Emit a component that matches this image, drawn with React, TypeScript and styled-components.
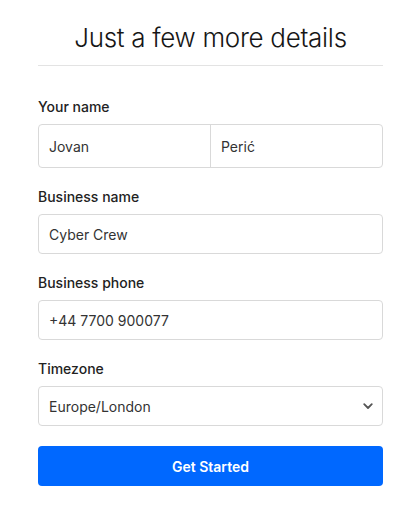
import * as React from "react"
import styled, { createGlobalStyle } from "styled-components"

const GlobalStyle = createGlobalStyle`
    body {
        margin: 0;
        background: #fff;
        font-family: Inter, "Noto Sans", sans-serif;
    }
`

const Page = styled.main`
    width: 345px;
    padding: 22px 36px 20px 38px;
`

const Title = styled.h1`
    margin: 0;
    padding-bottom: 11px;
    border-bottom: 1px solid #e3e3e3;
    text-align: center;
    font-family: Inter, sans-serif;
    font-size: 26px;
    line-height: 32px;
    font-weight: 350;
    letter-spacing: -0.3px;
    color: #161616;
`

const Form = styled.form`
    display: flex;
    flex-direction: column;
    gap: 19px;
    margin-top: 31px;
`

const Field = styled.div`
    display: flex;
    flex-direction: column;
`

const Label = styled.label`
    font-size: 14px;
    line-height: 20px;
    font-weight: 500;
    color: #222;
    margin-bottom: 7px;
`

const Box = styled.div<{ $tall?: boolean }>`
    display: flex;
    height: ${p => (p.$tall ? 44 : 40)}px;
    box-sizing: border-box;
    border: 1px solid #d9d9d9;
    border-radius: 4px;
    background: #fff;
    overflow: hidden;
`

const Input = styled.input<{ $split?: boolean }>`
    flex: 1;
    min-width: 0;
    border: none;
    border-left: ${p => (p.$split ? "1px solid #d9d9d9" : "none")};
    padding: 0 10px;
    font-family: inherit;
    font-size: 14px;
    color: #333;
    background: transparent;
    outline: none;
`

const Select = styled.div`
    flex: 1;
    display: flex;
    align-items: center;
    justify-content: space-between;
    padding: 0 8px 0 10px;
    font-size: 14px;
    color: #333;
`

const Button = styled.button`
    margin-top: 1px;
    height: 40px;
    border: none;
    border-radius: 4px;
    background: #0068ff;
    color: #fff;
    font-family: inherit;
    font-size: 14px;
    font-weight: 600;
`

const Chevron = () => (
    <svg width="12" height="12" viewBox="0 0 12 12">
        <path d="M2.2 4.2 L6 8 L9.8 4.2" fill="none" stroke="#555" strokeWidth="1.8" strokeLinecap="round" strokeLinejoin="round" />
    </svg>
)

const App = () => {
    return (
        <>
            <GlobalStyle />
            <Page>
                <Title>Just a few more details</Title>
                <Form onSubmit={e => e.preventDefault()}>
                    <Field>
                        <Label>Your name</Label>
                        <Box $tall>
                            <Input defaultValue="Jovan" />
                            <Input $split defaultValue="Perić" />
                        </Box>
                    </Field>
                    <Field>
                        <Label>Business name</Label>
                        <Box>
                            <Input defaultValue="Cyber Crew" />
                        </Box>
                    </Field>
                    <Field>
                        <Label>Business phone</Label>
                        <Box>
                            <Input defaultValue="+44 7700 900077" />
                        </Box>
                    </Field>
                    <Field>
                        <Label>Timezone</Label>
                        <Box>
                            <Select>
                                <span>Europe/London</span>
                                <Chevron />
                            </Select>
                        </Box>
                    </Field>
                    <Button type="submit">Get Started</Button>
                </Form>
            </Page>
        </>
    )
}

export default App
